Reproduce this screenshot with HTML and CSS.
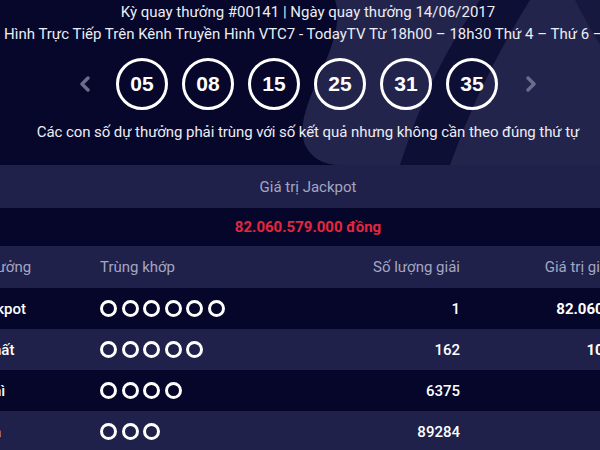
FILE: index.html
```html
<!DOCTYPE html>
<html lang="vi">
<head>
<meta charset="utf-8">
<title>Kết quả Vietlott</title>
<link rel="stylesheet" href="styles.css">
</head>
<body>
<div class="page">
  <section class="hero">
    <svg class="hero-bg" viewBox="0 0 600 165" preserveAspectRatio="none" aria-hidden="true">
      <path d="M335,0 C350,45 290,105 305,145 Q315,165 340,165 L600,165 L600,0 Z" fill="#23244c"/>
      <path d="M480,0 L530,0 Q480,80 450,165 L400,165 Q430,70 480,0 Z" fill="#0e0f34"/>
      <path d="M575,0 L600,0 L600,45 Q585,20 575,0 Z" fill="#17183e"/>
    </svg>
    <p class="line1">Kỳ quay thưởng #00141 | Ngày quay thưởng 14/06/2017</p>
    <p class="line2">Hình Trực Tiếp Trên Kênh Truyền Hình VTC7 - TodayTV Từ 18h00 – 18h30 Thứ 4 – Thứ 6 – Chủ Nhật</p>
    <div class="balls">
      <svg class="arrow arrow-left" viewBox="0 0 10 16" aria-hidden="true"><path d="M8,2 L2,8 L8,14" fill="none" stroke="#6b6d8c" stroke-width="3.4" stroke-linecap="round" stroke-linejoin="round"/></svg>
      <span class="ball">05</span>
      <span class="ball">08</span>
      <span class="ball">15</span>
      <span class="ball">25</span>
      <span class="ball">31</span>
      <span class="ball">35</span>
      <svg class="arrow arrow-right" viewBox="0 0 10 16" aria-hidden="true"><path d="M2,2 L8,8 L2,14" fill="none" stroke="#6b6d8c" stroke-width="3.4" stroke-linecap="round" stroke-linejoin="round"/></svg>
    </div>
    <p class="note">Các con số dự thưởng phải trùng với số kết quả nhưng không cần theo đúng thứ tự</p>
  </section>

  <div class="jp-head">Giá trị Jackpot</div>
  <div class="jp-value">82.060.579.000 đồng</div>

  <div class="prizes">
    <div class="row head">
      <div class="c1">Giải thưởng</div>
      <div class="c2">Trùng khớp</div>
      <div class="c3">Số lượng giải</div>
      <div class="c4">Giá trị giải (đồng)</div>
    </div>
    <div class="row dark">
      <div class="c1 jp">Jackpot</div>
      <div class="c2 dots"><i></i><i></i><i></i><i></i><i></i><i></i></div>
      <div class="c3">1</div>
      <div class="c4 strong">82.060.579.000</div>
    </div>
    <div class="row light">
      <div class="c1">Giải nhất</div>
      <div class="c2 dots"><i></i><i></i><i></i><i></i><i></i></div>
      <div class="c3">162</div>
      <div class="c4 strong">10.000.000</div>
    </div>
    <div class="row dark">
      <div class="c1">Giải nhì</div>
      <div class="c2 dots"><i></i><i></i><i></i><i></i></div>
      <div class="c3">6375</div>
      <div class="c4 strong">300.000</div>
    </div>
    <div class="row light">
      <div class="c1">Giải ba</div>
      <div class="c2 dots"><i></i><i></i><i></i></div>
      <div class="c3">89284</div>
      <div class="c4 strong">30.000</div>
    </div>
  </div>
</div>
</body>
</html>
```

FILE: styles.css
```css
* { box-sizing: border-box; }
html, body { margin: 0; padding: 0; }
body {
  width: 600px;
  height: 450px;
  overflow: hidden;
  background: #05062a;
  font-family: Roboto, "Liberation Sans", sans-serif;
  color: #ffffff;
}
.page { width: 600px; overflow: hidden; }

.hero {
  position: relative;
  height: 165px;
  background: #06072a;
  padding-left: 16px;
  display: flex;
  flex-direction: column;
  align-items: center;
  overflow: hidden;
}
.hero-bg {
  position: absolute;
  left: 0; top: 0;
  width: 600px; height: 165px;
  z-index: 0;
}
.hero > p, .hero > .balls { position: relative; z-index: 1; }

.line1 {
  margin: 3px 0 0;
  font-size: 15px;
  line-height: 18px;
  color: #ecedf4;
  white-space: nowrap;
}
.line2 {
  margin: 4px 0 0 -12px;
  align-self: flex-start;
  font-size: 15px;
  line-height: 18px;
  color: #ecedf4;
  white-space: nowrap;
}
.balls {
  margin-top: 15px;
  display: flex;
  align-items: center;
  gap: 14px;
}
.arrow { width: 10px; height: 16px; display: block; }
.arrow-left { margin-right: 12px; }
.arrow-right { margin-left: 14px; }
.ball {
  width: 52px;
  height: 52px;
  border: 3px solid #ffffff;
  border-radius: 50%;
  display: flex;
  align-items: center;
  justify-content: center;
  font-family: "Liberation Sans", Arial, sans-serif;
  font-weight: 700;
  font-size: 21px;
  color: #ffffff;
}
.note {
  margin: 13px 0 0;
  font-size: 15px;
  letter-spacing: -0.07px;
  line-height: 18px;
  color: #ecedf4;
  white-space: nowrap;
}

.jp-head {
  height: 43px;
  background: #20214a;
  padding-left: 16px;
  display: flex;
  align-items: center;
  justify-content: center;
  font-size: 15px;
  color: #a4a6c2;
}
.jp-value {
  height: 38px;
  background: #05062a;
  padding-left: 16px;
  display: flex;
  align-items: center;
  justify-content: center;
  font-size: 15px;
  font-weight: 700;
  color: #e4263f;
}

.prizes { margin-left: -60px; width: 724px; }
.row {
  display: grid;
  grid-template-columns: 160px 200px 160px 204px;
  align-items: center;
  height: 41px;
  font-size: 15px;
}
.row.head { background: #20214a; color: #a4a6c2; height: 42px; }
.row.dark { background: #05062a; }
.row.light { background: #20214a; }
.c1 { padding-left: 15px; font-weight: 500; white-space: nowrap; }
.head .c1 { font-weight: 400; padding-left: 14px; }
.c1.jp { padding-left: 32px; }
.c2 { white-space: nowrap; }
.c3 { text-align: right; font-weight: 500; }
.head .c3, .head .c4 { font-weight: 400; }
.c4 { text-align: right; white-space: nowrap; }
.head .c4 { padding-right: 4px; }
.c4.strong { font-weight: 700; }
.dots { display: flex; gap: 4.6px; }
.dots i {
  display: block;
  width: 17px;
  height: 17px;
  border: 3px solid #ffffff;
  border-radius: 50%;
}
```
